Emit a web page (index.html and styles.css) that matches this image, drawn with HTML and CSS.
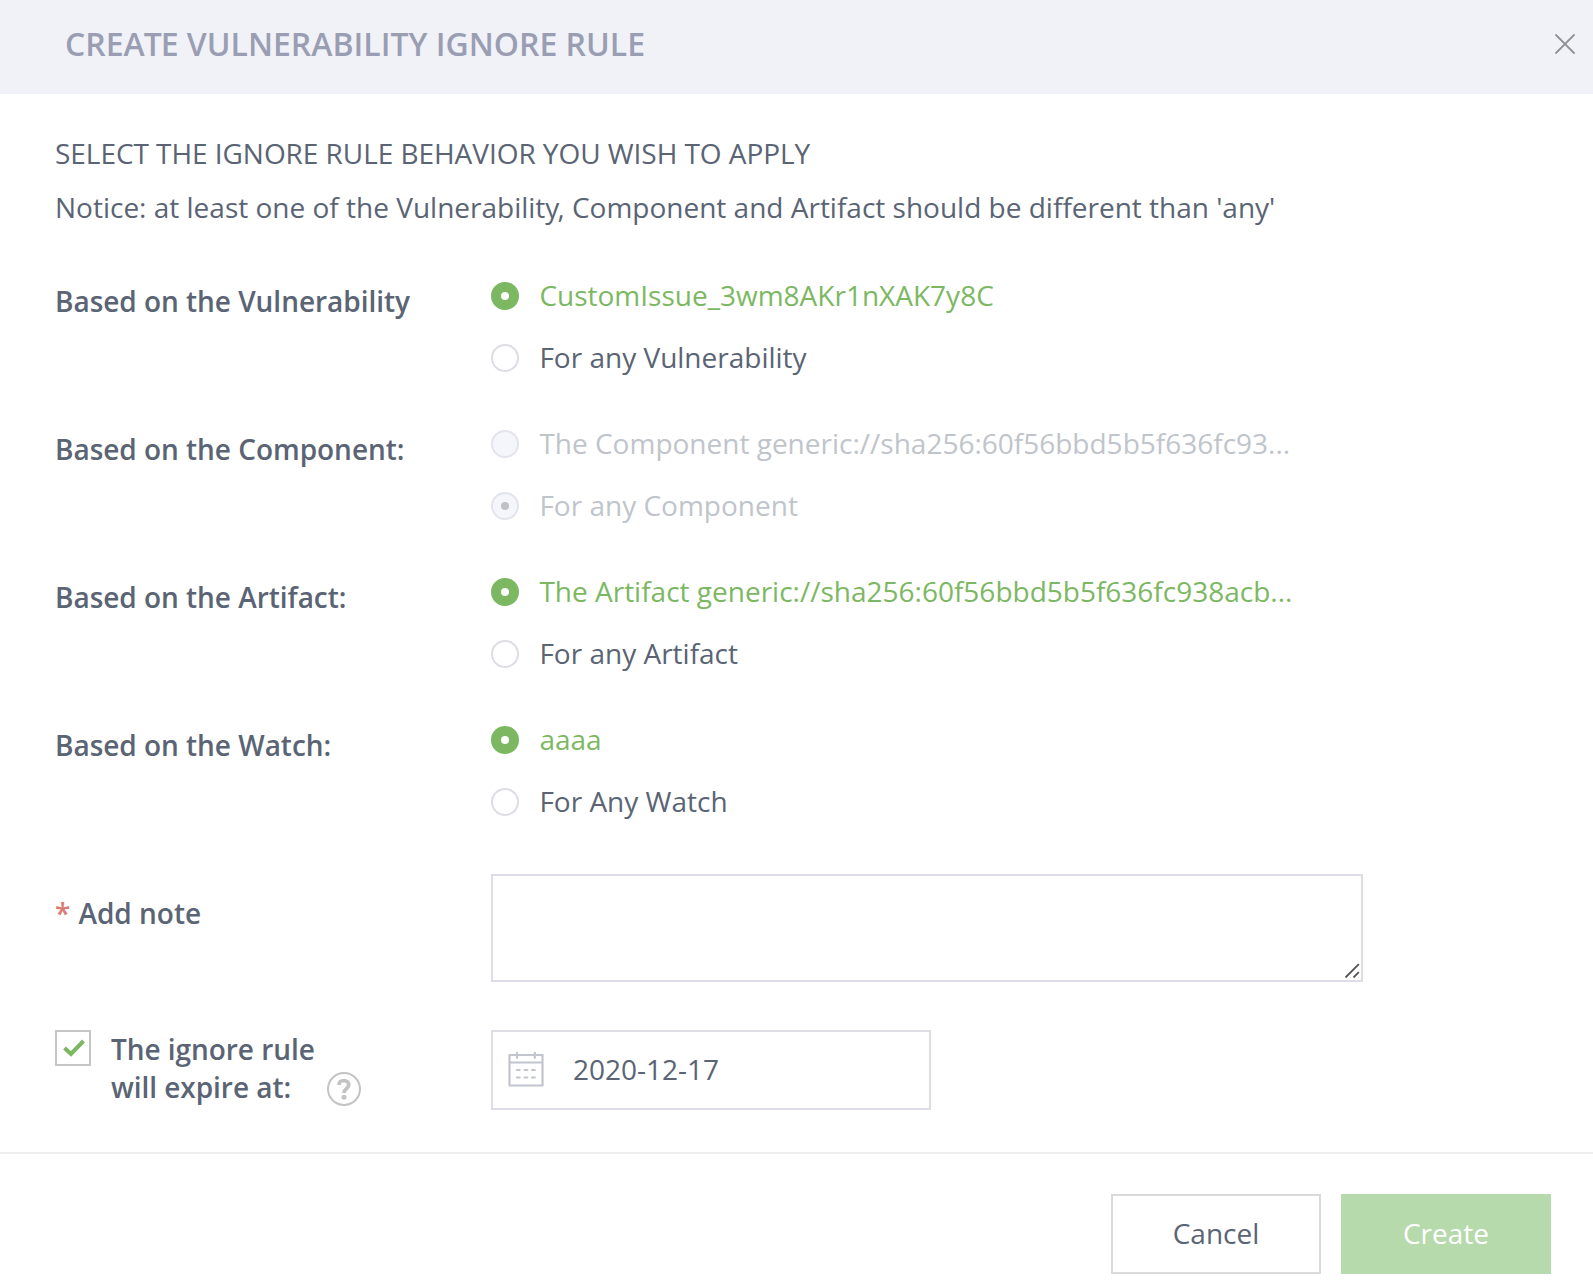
FILE: index.html
```html
<!DOCTYPE html>
<html lang="en">
<head>
<meta charset="utf-8">
<title>Create Vulnerability Ignore Rule</title>
<link rel="stylesheet" href="styles.css">
</head>
<body>
<main class="modal">
  <header class="modal-header">
    <h1 class="modal-title">CRE<span class="kern-title">AT</span>E VULNERABILITY IGNORE RULE</h1>
    <svg class="close" viewBox="0 0 20 20"><path d="M1 1L19 19M19 1L1 19"/></svg>
  </header>
  <section class="modal-body">
    <p class="intro lead">SELECT THE IGNORE RULE BEHAVIOR YOU WISH TO APPLY</p>
    <p class="intro notice">Notice: at least one of the Vulnerability<span class="kern-comma">,</span> Component and Artifact should be different than 'any'</p>
    <div class="groups">
      <div class="row">
        <div class="label">Based on the Vulnerability</div>
        <div class="options">
          <div class="option selected"><span class="radio"></span><span>CustomIssue_3wm8AKr1nXAK7y8C</span></div>
          <div class="option"><span class="radio"></span><span>For any Vulnerability</span></div>
        </div>
      </div>
      <div class="row">
        <div class="label">Based on the Component:</div>
        <div class="options">
          <div class="option disabled"><span class="radio"></span><span>The Component generic://sha256:60f56bbd5b5f636fc93...</span></div>
          <div class="option disabled checked"><span class="radio"></span><span>For any Component</span></div>
        </div>
      </div>
      <div class="row">
        <div class="label">Based on the Artifact:</div>
        <div class="options">
          <div class="option selected"><span class="radio"></span><span>The Artifact generic://sha256:60f56bbd5b5f636fc938acb...</span></div>
          <div class="option"><span class="radio"></span><span>For any Artifact</span></div>
        </div>
      </div>
      <div class="row">
        <div class="label">Based on the Watch:</div>
        <div class="options">
          <div class="option selected"><span class="radio"></span><span>aaaa</span></div>
          <div class="option"><span class="radio"></span><span>For Any Watch</span></div>
        </div>
      </div>
    </div>
    <div class="row note-row">
      <div class="label note-label"><span class="required">*</span> Add note</div>
      <div class="note">
        <svg class="grip" viewBox="0 0 16 16"><path d="M1.5 14.5L14.8 1.2M9.5 14.5L14.8 9.2"/></svg>
      </div>
    </div>
    <div class="row expire-row">
      <div class="expire">
        <span class="checkbox"><svg class="check" viewBox="0 0 22 18"><path d="M1.5 9L8 15L20.5 2"/></svg></span>
        <span class="expire-label">The ignore rule<br>will expire at:</span>
        <svg class="help" viewBox="0 0 36 36"><circle cx="18" cy="18" r="16"/><path d="M13 14C13.2 9.8 15.6 9.6 18 9.6C21 9.6 22.8 11.4 22.8 13.8C22.8 17.6 18 17.4 18 22"/><circle class="dot" cx="18" cy="26.3" r="2.5"/></svg>
      </div>
      <div class="date">
        <svg class="calendar" viewBox="0 0 36 36"><path d="M1.5 4H34.5V34.5H1.5ZM1.5 11.5H34.5M9 1.8V6.8M26.8 1.8V6.8"/><path d="M9 19H11.7M16.6 19H19.3M24.1 19H26.8M9 26.5H11.7M16.6 26.5H19.3M24.1 26.5H26.8"/></svg>
        <span>2020-12-17</span>
      </div>
    </div>
  </section>
  <footer class="modal-footer">
    <div class="button cancel">Cancel</div>
    <div class="button create">Create</div>
  </footer>
</main>
</body>
</html>
```
FILE: styles.css
```css
* { box-sizing: border-box; }
body {
  margin: 0;
  background: #fff;
  color: #5a6474;
  font: 28px/38px "Open Sans", "Noto Sans", sans-serif;
}
h1, p { margin: 0; }
.modal { width: 1593px; height: 1284px; overflow: hidden; }
.modal-header {
  height: 94px;
  padding: 0 18px 6px 65px;
  display: flex;
  align-items: center;
  justify-content: space-between;
  background: #f1f2f8;
}
.modal-title {
  font-size: 32px;
  line-height: 44px;
  font-weight: 600;
  color: #9a9eb3;
}
.kern-title { letter-spacing: -1.1px; }
.close { width: 20px; height: 20px; fill: none; stroke: #919299; stroke-width: 1.8; stroke-linecap: round; }
.modal-body { height: 1058px; padding: 40px 55px 0; }
.intro { white-space: nowrap; }
.lead { letter-spacing: -.05px; }
.notice { margin-top: 16px; }
.kern-comma { margin-left: -2px; }
.groups { margin-top: 50px; display: flex; flex-direction: column; gap: 48px; }
.row { display: grid; grid-template-columns: 436px 1fr; align-items: start; }
.label { padding-top: 6px; font-weight: 600; letter-spacing: -.03px; white-space: nowrap; }
.options { display: flex; flex-direction: column; gap: 24px; }
.option { height: 38px; display: flex; gap: 20.4px; white-space: nowrap; }
.radio {
  width: 28px;
  height: 28px;
  margin-top: 6px;
  border: 2px solid #dddee5;
  border-radius: 50%;
  flex: none;
  display: grid;
  place-items: center;
}
.selected { color: #7cb862; }
.selected .radio { background: #7cb862; border-color: #7cb862; }
.selected .radio::after,
.checked .radio::after { content: ""; width: 8px; height: 8px; border-radius: 50%; background: #fff; }
.disabled { color: #c0c4cb; }
.disabled .radio { background: #f5f6fb; border-color: #e4e5ec; }
.checked .radio::after { background: #bfc1c8; }
.note-row { margin-top: 54px; }
.note-label { padding-top: 20px; letter-spacing: 0; }
.required { margin-right: .8px; color: #d97a75; }
.note {
  width: 872px;
  height: 108px;
  padding: 0 1px 1px;
  border: 2px solid #dddee5;
  display: flex;
  align-items: flex-end;
  justify-content: flex-end;
}
.grip { width: 16px; height: 16px; fill: none; stroke: #555; stroke-width: 1.8; }
.expire-row { margin-top: 48px; }
.expire { display: flex; }
.checkbox {
  width: 36px;
  height: 36px;
  padding-left: 2px;
  border: 2px solid #c6c6c6;
  display: grid;
  place-items: center;
}
.check { width: 22px; height: 18px; fill: none; stroke: #7cb862; stroke-width: 4; }
.expire-label { width: 215px; margin-left: 20px; font-weight: 600; letter-spacing: -.05px; white-space: nowrap; }
.help { width: 36px; height: 36px; margin-top: 41px; fill: none; stroke: #c3c3c3; stroke-width: 2; }
.help path { stroke-width: 3.8; }
.help .dot { fill: #c3c3c3; stroke: none; }
.date {
  width: 440px;
  height: 80px;
  padding: 0 0 2px 15px;
  border: 2px solid #dddee5;
  display: flex;
  align-items: center;
  gap: 29px;
}
.calendar { width: 36px; height: 36px; fill: none; stroke: #c2c4ce; stroke-width: 2.2; stroke-linecap: round; stroke-linejoin: round; }
.modal-footer {
  height: 132px;
  padding: 40px 42px 0 0;
  border-top: 2px solid #f0f0f2;
  display: flex;
  justify-content: flex-end;
  gap: 20px;
}
.button { width: 210px; height: 80px; padding-bottom: 2px; display: flex; align-items: center; justify-content: center; }
.cancel { border: 2px solid #d9d9d9; }
.create { background: #b7daac; color: #fff; }
```
